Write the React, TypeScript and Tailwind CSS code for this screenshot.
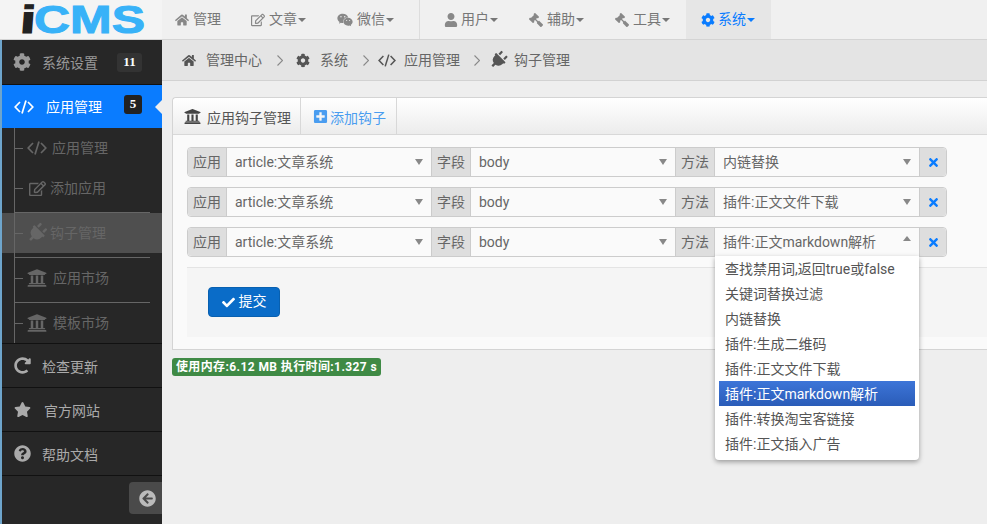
import React from "react";
import { FaHome, FaRegEdit, FaWeixin, FaUser, FaGavel, FaCog, FaPlug, FaUniversity, FaPlusSquare, FaCheck, FaTimes, FaRedoAlt, FaStar, FaQuestionCircle, FaArrowCircleLeft } from "react-icons/fa";

const font = { fontFamily: 'Roboto,"Noto Sans CJK SC",sans-serif' };

function CodeIcon({ width, height }: { width: number; height: number }) {
  return (
    <svg width={width} height={height} viewBox="0 0 20 14" fill="none" stroke="currentColor" strokeWidth="1.7">
      <polyline points="6,2 1.2,7 6,12" />
      <polyline points="14,2 18.8,7 14,12" />
      <line x1="12" y1="0.5" x2="8" y2="13.5" />
    </svg>
  );
}

function Chevron({ className }: { className: string }) {
  return (
    <svg width="6" height="11" viewBox="0 0 6 11" fill="none" stroke="#888" strokeWidth="1.1" className={className}>
      <polyline points="0.5,0.5 5.5,5.5 0.5,10.5" />
    </svg>
  );
}

function Caret() {
  return <span className="ml-[1px] w-0 h-0 border-x-[4px] border-x-transparent border-t-[4px] border-t-current" />;
}

function NavItem({ icon, label, caret = true, active = false, className = "" }: { icon: React.ReactNode; label: string; caret?: boolean; active?: boolean; className?: string }) {
  return (
    <div className={`h-[39px] flex items-center text-[14px] ${active ? "bg-[#e6e6e6] text-[#0a7cff]" : "text-[#777]"} ${className}`}>
      <span className={`text-[14px] ${active ? "text-[#0a7cff]" : "text-[#888]"}`}>{icon}</span>
      <span className="flex items-center">{label}{caret && <Caret />}</span>
    </div>
  );
}

function Crumb({ icon, label, iconClass }: { icon: React.ReactNode; label: string; iconClass: string }) {
  return (
    <span className="flex items-center text-[14px] text-[#666]">
      <span className={`text-[#555] text-[15px] flex justify-center ${iconClass}`}>{icon}</span>
      {label}
    </span>
  );
}

function Side({ icon, label, textClass = "" }: { icon: React.ReactNode; label: string; textClass?: string }) {
  return (
    <div className="h-[44px] border-b border-[#111] flex items-center text-[14px] text-[#aaa] pt-[4px]">
      <span className="w-[40px] flex justify-center text-[#aaa] text-[17px] -mt-[4px]">{icon}</span>
      <span className={textClass}>{label}</span>
    </div>
  );
}

function SubItem({ icon, label, textX, active = false, line = false }: { icon: React.ReactNode; label: string; textX: string; active?: boolean; line?: boolean }) {
  return (
    <div>
      {line && <div className="ml-[12px] w-[136px] h-px bg-[#666]" />}
      <div className={`h-[40px] flex items-center text-[14px] text-[#666] ${active ? "bg-[#4f4f4f]" : ""}`}>
        <span className="ml-[12px] w-[9px] h-px bg-[#666]" />
        <span className="w-[20px] ml-[4px] flex justify-center text-[#666] text-[20px]">{icon}</span>
        <span className={textX}>{label}</span>
      </div>
    </div>
  );
}

function SelectField({ value, open = false }: { value: string; open?: boolean }) {
  return (
    <div className="flex-1 h-full bg-[#fafafa] flex items-center justify-between pl-[8px] pr-[8px] text-[14px] text-[#666]">
      <span>{value}</span>
      {open ? (
        <span className="w-0 h-0 border-x-[4px] border-x-transparent border-b-[5px] border-b-[#888] -mt-[7px]" />
      ) : (
        <span className="w-0 h-0 border-x-[4px] border-x-transparent border-t-[6px] border-t-[#888]" />
      )}
    </div>
  );
}

function Lbl({ children }: { children: string }) {
  return <div className="w-[40px] h-full bg-[#dedede] flex items-center justify-center text-[14px] text-[#666] border-x border-[#ccc]">{children}</div>;
}

function Row({ method, open = false }: { method: string; open?: boolean }) {
  return (
    <div className="w-[760px] h-[30px] flex rounded-[4px] border border-[#ccc]">
      <div className="w-[39px] h-full bg-[#dedede] rounded-l-[4px] flex items-center justify-center text-[14px] text-[#666] border-r border-[#ccc]">应用</div>
      <div className="w-[204px] h-full flex"><SelectField value="article:文章系统" /></div>
      <Lbl>字段</Lbl>
      <div className="w-[204px] h-full flex"><SelectField value="body" /></div>
      <Lbl>方法</Lbl>
      <div className="w-[204px] h-full flex"><SelectField value={method} open={open} /></div>
      <div className="flex-1 h-full bg-[#dedede] rounded-r-[4px] border-l border-[#ccc] flex items-center justify-center text-[#0a7cff] text-[13px]"><FaTimes /></div>
    </div>
  );
}

const options = ["查找禁用词,返回true或false", "关键词替换过滤", "内链替换", "插件:生成二维码", "插件:正文文件下载", "插件:正文markdown解析", "插件:转换淘宝客链接", "插件:正文插入广告"];

export default function App() {
  return (
    <div className="w-[987px] h-[524px] overflow-hidden bg-[#eeeeee] flex flex-col" style={font}>
      <header className="h-[40px] shrink-0 bg-[#f0f0f0] border-b border-[#d4d4d4] flex">
        <div className="w-[162px] h-[39px] bg-[#f4f4f4] flex items-center pl-[20px]" style={{ fontFamily: '"Liberation Sans",sans-serif', fontWeight: 700 }}>
          <span className="inline-block text-[39px] leading-none text-[#222] scale-x-[1.5] origin-left -skew-x-3 [-webkit-text-stroke:1px_#222]">i</span>
          <span className="inline-block text-[39px] leading-none text-[#38b2f8] ml-[3px] scale-x-[1.28] origin-left [-webkit-text-stroke:1px_#38b2f8]">CMS</span>
        </div>
        <div className="flex ml-[13px]">
          <NavItem icon={<FaHome />} label="管理" caret={false} className="gap-[4px]" />
          <NavItem icon={<FaRegEdit />} label="文章" className="ml-[30px] gap-[4px]" />
          <NavItem icon={<FaWeixin className="text-[16px]" />} label="微信" className="ml-[31px] gap-[4px]" />
          <div className="w-px h-[39px] bg-[#ddd] ml-[25px]" />
          <NavItem icon={<FaUser />} label="用户" className="ml-[24px] gap-[3px]" />
          <NavItem icon={<FaGavel className="-scale-x-100" />} label="辅助" className="ml-[31px] gap-[4px]" />
          <NavItem icon={<FaGavel className="-scale-x-100" />} label="工具" className="ml-[31px] gap-[4px]" />
          <NavItem icon={<FaCog />} label="系统" active className="ml-[16px] w-[85px] pl-[15px] gap-[3px]" />
        </div>
      </header>
      <div className="flex flex-1 min-h-0">
        <aside className="w-[162px] shrink-0 bg-[#272727] border-l-2 border-[#6ea5cc] flex flex-col relative">
          <div className="h-[45px] border-b border-[#111] flex items-center text-[14px] text-[#999]">
            <span className="w-[40px] flex justify-center text-[#999] text-[18px]"><FaCog /></span>
            <span className="mt-[2px]">系统设置</span>
            <span className="ml-[19px] w-[25px] h-[19px] rounded-[3px] bg-[#333] text-white text-[13px] font-bold flex items-center justify-center" style={{ fontFamily: '"Liberation Serif",serif' }}>11</span>
          </div>
          <div className="relative h-[43px] bg-[#0a7cff] flex items-center text-[14px] text-white">
            <span className="w-[44px] flex justify-center"><CodeIcon width={20} height={14} /></span>
            <span className="mt-[1px]">应用管理</span>
            <span className="ml-[22px] -mt-[5px] w-[18px] h-[19px] rounded-[3px] bg-[#222] text-white text-[13px] font-bold flex items-center justify-center" style={{ fontFamily: '"Liberation Serif",serif' }}>5</span>
            <span className="absolute right-0 top-[15px] w-0 h-0 border-y-[7px] border-y-transparent border-r-[7px] border-r-[#eeeeee]" />
          </div>
          <div className="relative h-[216px] border-b border-[#111]">
            <div className="absolute left-[12px] top-0 bottom-0 w-px bg-[#666]" />
            <SubItem icon={<CodeIcon width={20} height={14} />} label="应用管理" textX="ml-[5px]" />
            <SubItem icon={<FaRegEdit className="text-[17px]" />} label="添加应用" textX="ml-[3px]" />
            <div className="h-[4px]" />
            <SubItem icon={<FaPlug className="rotate-45" />} label="钩子管理" textX="ml-[3px]" active line />
            <div className="h-[4px]" />
            <SubItem icon={<FaUniversity />} label="应用市场" textX="ml-[6px]" line />
            <div className="h-[4px]" />
            <SubItem icon={<FaUniversity />} label="模板市场" textX="ml-[6px]" line />
          </div>
          <Side icon={<FaRedoAlt />} label="检查更新" />
          <Side icon={<FaStar />} label="官方网站" textClass="ml-[2px]" />
          <Side icon={<FaQuestionCircle />} label="帮助文档" />
          <div className="flex justify-end mt-[6px]">
            <div className="w-[33px] h-[32px] bg-[#4a4a4a] rounded-l-[4px] flex items-center justify-center text-[#bbb] text-[17px] pl-[3px]"><FaArrowCircleLeft /></div>
          </div>
        </aside>
        <main className="flex-1 min-w-0 flex flex-col">
          <div className="h-[41px] shrink-0 bg-[#e4e4e4] border-b border-[#d2d2d2] flex items-center pl-[20px]">
            <Crumb icon={<FaHome />} label="管理中心" iconClass="w-[14px] mr-[10px]" />
            <Chevron className="ml-[15px] mr-[13px]" />
            <Crumb icon={<FaCog />} label="系统" iconClass="w-[14px] mr-[10px]" />
            <Chevron className="ml-[15px] mr-[9px]" />
            <Crumb icon={<CodeIcon width={18} height={13} />} label="应用管理" iconClass="w-[18px] mr-[8px]" />
            <Chevron className="ml-[14px] mr-[10px]" />
            <Crumb icon={<FaPlug className="rotate-45 text-[18px]" />} label="钩子管理" iconClass="w-[17px] mr-[7px]" />
          </div>
          <div className="ml-[10px] mt-[16px] h-[253px] bg-[#fafafa] border border-r-0 border-[#d4d4d4] rounded-tl-[4px] flex flex-col">
            <div className="h-[37px] shrink-0 border-b border-[#d8d8d8] flex bg-gradient-to-b from-white to-[#ececec] rounded-tl-[4px]">
              <div className="w-[128px] border-r border-[#d8d8d8] flex items-center pl-[11px] text-[14px] text-[#555]">
                <FaUniversity className="text-[17px] mr-[6px] text-[#444]" /><span className="mt-[4px]">应用钩子管理</span>
              </div>
              <div className="w-[96px] border-r border-[#d8d8d8] flex items-center pl-[12px] text-[14px] text-[#4a9df0]">
                <FaPlusSquare className="text-[15px] mr-[2px] text-[#4a9df0]" /><span className="mt-[4px]">添加钩子</span>
              </div>
            </div>
            <div className="relative flex-1 px-[14px] pt-[12px]">
              <div className="flex flex-col gap-[10px]">
                <Row method="内链替换" />
                <Row method="插件:正文文件下载" />
                <Row method="插件:正文markdown解析" open />
              </div>
              <div className="mt-[10px] h-[70px] border-t border-[#e4e4e4] bg-[#f5f5f5] pl-[21px] pt-[19px] -mr-[14px]">
                <button className="w-[72px] h-[30px] rounded-[4px] bg-[#0a6cc8] border border-[#0860b0] text-white text-[14px] flex items-center justify-center gap-[4px]"><FaCheck className="text-[13px]" /><span className="-mt-[1px]">提交</span></button>
              </div>
              <div className="absolute left-[542px] top-[121px] w-[204px] h-[204px] bg-white rounded-b-[4px] shadow-[0_2px_5px_rgba(0,0,0,0.35)] z-10 px-[4px] text-[14px] text-[#555]">
                {options.map((o) => (
                  <div key={o} className={`h-[25px] flex items-center pl-[6px] pt-[2px] ${o === "插件:正文markdown解析" ? "bg-gradient-to-b from-[#3d75d8] to-[#2a5cb8] text-white" : ""}`}>{o}</div>
                ))}
              </div>
            </div>
          </div>
          <div className="ml-[10px] mt-[8px] w-[209px] h-[18px] bg-[#3f8a45] rounded-[3px] flex items-center justify-center text-[12px] font-bold text-white whitespace-nowrap tracking-[0.4px]">使用内存:6.12 MB 执行时间:1.327 s</div>
        </main>
      </div>
    </div>
  );
}
